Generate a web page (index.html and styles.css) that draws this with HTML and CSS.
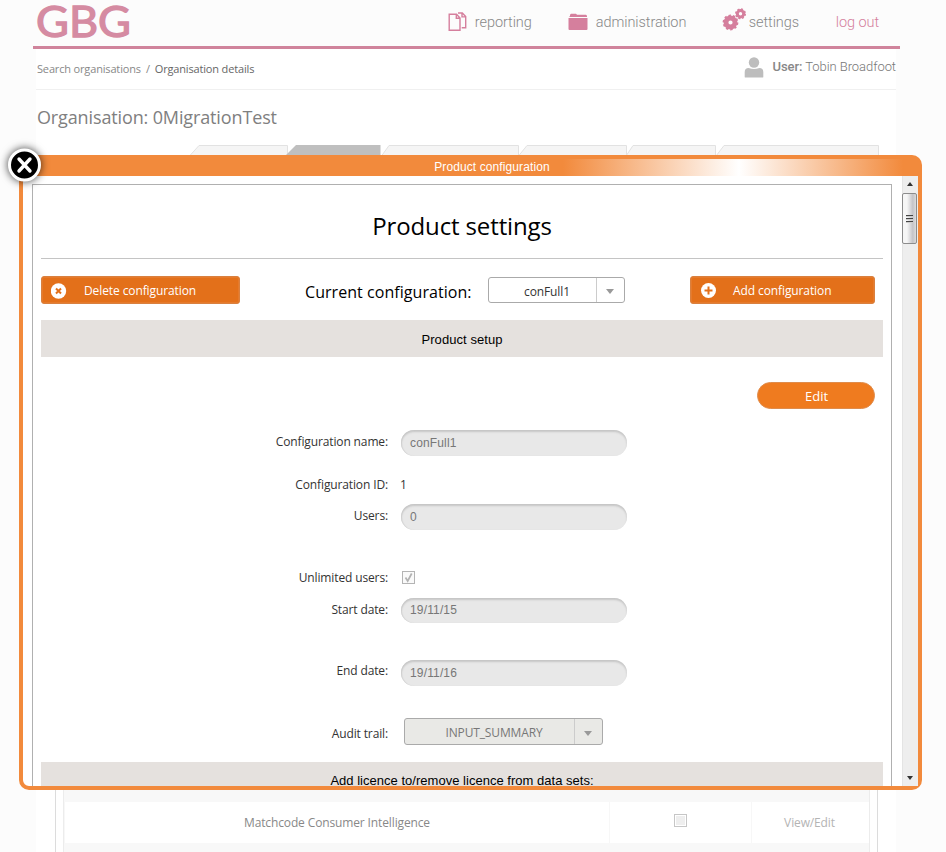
FILE: index.html
```
<!DOCTYPE html>
<html lang="en">
<head>
    <meta charset="UTF-8">
    <meta name="viewport" content="width=device-width, initial-scale=1.0">
    <title>Organisation details</title>
    <link rel="stylesheet" href="styles.css">
</head>
<body>
    <header class="header">
        <svg class="logo" width="110" height="46" viewBox="0 0 110 46">
            <text x="3" y="37.3" textLength="95" lengthAdjust="spacingAndGlyphs">GBG</text>
        </svg>
        <nav class="nav">
            <a class="nav-item reporting">
                <svg width="20" height="20" viewBox="0 0 20 20" fill="none" stroke="#d57f9d" stroke-width="1.4">
                    <path d="M1.2 2.2h7.3l3.5 3.8v12.3H1.2z M8.3 2.4v3.9h3.5"/>
                    <path d="M10 1h4.3l3.4 3.6v11.2h-4 M14 1.2v3.7h3.5"/>
                </svg>
                <span>reporting</span>
            </a>
            <a class="nav-item administration">
                <svg width="20" height="18" viewBox="0 0 20 18">
                    <path d="M2 3V1.8L3 .8h5l1 1h9l1 1V4H1z" fill="#d57f9d"/>
                    <path d="M.5 5h19v11a1 1 0 0 1-1 1h-17a1 1 0 0 1-1-1z" fill="#d57f9d"/>
                </svg>
                <span>administration</span>
            </a>
            <a class="nav-item settings">
                <svg width="24" height="24" viewBox="0 0 24 24" fill="none" stroke="#d57f9d">
                    <circle cx="8.5" cy="14.5" r="4.5" stroke-width="4.8"/>
                    <circle cx="8.5" cy="14.5" r="7" stroke-width="1.8" stroke-dasharray="2.4 1.998"/>
                    <circle cx="18.5" cy="5.8" r="3.2" stroke-width="3"/>
                    <circle cx="18.5" cy="5.8" r="4.8" stroke-width="1.4" stroke-dasharray="2 1.77"/>
                </svg>
                <span>settings</span>
            </a>
            <a class="nav-item logout"><span>log out</span></a>
        </nav>
    </header>

    <main class="page">
        <div class="topbar">
            <div class="breadcrumb"><a>Search organisations</a><i>/</i><b>Organisation details</b></div>
            <div class="user">
                <svg width="20" height="21" viewBox="0 0 20 21" fill="#bdbdbd">
                    <circle cx="10" cy="5.5" r="5.2"/>
                    <path d="M.7 20V15q0-4 4-4 5.3 2.2 10.6 0 4 0 4 4v5q0 .5-1 .5H1.7q-1 0-1-.5z"/>
                </svg>
                <span class="user-name"><strong>User:</strong> Tobin Broadfoot</span>
            </div>
        </div>
        <h2 class="org-title">Organisation: 0MigrationTest</h2>
        <svg class="tabs" width="700" height="12" viewBox="0 0 700 12" fill="#f5f5f5" stroke="#e2e2e2">
            <path d="M1.5 11L11 .5h88.5V12"/>
            <path d="M193.5 11L201 .5h129.5V12"/>
            <path d="M330.5 11L339 .5h99.5V12"/>
            <path d="M438 11L445 .5h82.5V12"/>
            <path d="M528 11L536 .5h154.500V12"/>
            <path d="M97 11L108 0h84.500v12H97z" fill="#bfbfbf" stroke="none"/>
        </svg>
        <div class="tab-panel">
            <div class="table">
                <div class="row alt hidden-row"></div>
                <div class="row">
                    <div class="cell cell-name">Matchcode Consumer Intelligence</div>
                    <div class="cell cell-check"><span class="check"></span></div>
                    <div class="cell cell-action">View/Edit</div>
                </div>
                <div class="row alt"></div>
            </div>
        </div>
    </main>

    <div class="modal">
        <div class="modal-title"><span>Product configuration</span></div>
        <div class="modal-body">
            <div class="panel">
                <h1>Product settings</h1>
                <div class="toolbar">
                    <button class="btn btn-delete">
                        <svg width="16" height="16" viewBox="0 0 16 16">
                            <circle cx="7.5" cy="8" r="7.7" fill="#fff"/>
                            <path d="M5 5.500l5 5M10 5.500l-5 5" stroke="#e3701a" stroke-width="2"/>
                        </svg>
                        <span>Delete configuration</span>
                    </button>
                    <span class="current-label">Current configuration:</span>
                    <div class="select select-config"><span>conFull1</span><i></i></div>
                    <button class="btn btn-add">
                        <svg width="16" height="16" viewBox="0 0 16 16">
                            <circle cx="7.5" cy="7.500" r="7.500" fill="#fff"/>
                            <path d="M7.500 3.500v8M3.500 7.500h8" stroke="#e3701a" stroke-width="2"/>
                        </svg>
                        <span>Add configuration</span>
                    </button>
                </div>
                <div class="section">Product setup</div>
                <div class="edit-row"><button class="btn-edit">Edit</button></div>
                <div class="field f-name"><label>Configuration name:</label><div class="input">conFull1</div></div>
                <div class="field f-id"><label>Configuration ID:</label><span class="value">1</span></div>
                <div class="field f-users"><label>Users:</label><div class="input">0</div></div>
                <div class="field f-unlimited">
                    <label>Unlimited users:</label>
                    <svg class="ticked" width="13" height="13" viewBox="0 0 13 13" fill="none">
                        <rect x=".5" y=".5" width="12" height="12" fill="#fafafa" stroke="#b4b4b4"/>
                        <path d="M3.500 6.500l2.200 3.500 4-7.500" stroke="#b2b2b2" stroke-width="1.700"/>
                    </svg>
                </div>
                <div class="field f-start"><label>Start date:</label><div class="input">19/11/15</div></div>
                <div class="field f-end"><label>End date:</label><div class="input">19/11/16</div></div>
                <div class="field f-audit"><label>Audit trail:</label><div class="select select-audit"><span>INPUT_SUMMARY</span><i></i></div></div>
                <div class="section section-licence">Add licence to/remove licence from data sets:</div>
            </div>
            <div class="scrollbar">
                <span class="arrow arrow-up"></span>
                <div class="thumb"><i></i><i></i><i></i></div>
                <span class="arrow arrow-down"></span>
            </div>
        </div>
        <svg class="close" width="46" height="46" viewBox="0 0 46 46">
            <circle cx="22.500" cy="23" r="15" fill="#000" stroke="#fff" stroke-width="3"/>
            <path d="M17 17l11 12M28 17l-11 12" stroke="#fff" stroke-width="3.400" stroke-linecap="round"/>
        </svg>
    </div>
</body>
</html>
```

FILE: styles.css
```
* {
    margin: 0;
    padding: 0;
    box-sizing: border-box;
}

body {
    width: 946px;
    height: 852px;
    overflow: hidden;
    background: #fcfcfc;
    font-family: 'Open Sans', 'Noto Sans', sans-serif;
    font-size: 12px;
    letter-spacing: -0.13px;
    color: #333;
}

/* header */
.header {
    display: flex;
    justify-content: space-between;
    height: 49px;
    margin: 0 46px 0 33px;
    border-bottom: 3px solid #d0849c;
}

.logo {
    overflow: visible;
}

.logo text {
    font-family: 'Lato', sans-serif;
    font-weight: 400;
    font-size: 43px;
    letter-spacing: 0;
    fill: #d58ba2;
    stroke: #d58ba2;
    stroke-width: 1.3px;
}

.nav {
    display: flex;
    align-items: center;
    height: 43px;
    padding-right: 21px;
    font-family: 'Roboto', sans-serif;
    font-weight: 300;
    font-size: 14.5px;
    letter-spacing: -0.08px;
    color: #888;
}

.nav-item {
    display: flex;
    align-items: center;
    white-space: nowrap;
}

.nav-item span {
    padding-top: 1px;
}

.reporting { width: 120px; gap: 7px; }
.administration { width: 154px; gap: 8px; }
.settings { width: 114px; gap: 3px; }
.settings svg { margin-top: -3px; }
.logout { color: #d57f9d; }

/* page behind the dialog */
.page {
    display: flex;
    flex-direction: column;
    width: 860px;
    height: 803px;
    margin-left: 36px;
    background: #fff;
}

.topbar {
    display: flex;
    flex: none;
    justify-content: space-between;
    height: 41px;
    border-bottom: 1px solid #f0f0f0;
}

.breadcrumb {
    padding: 12px 0 0 1px;
    font-size: 11px;
    letter-spacing: -0.16px;
    line-height: 16px;
    color: #888;
}

.breadcrumb i {
    margin: 0 5px;
    font-style: normal;
}

.breadcrumb b {
    font-weight: 400;
    color: #666;
}

.user {
    display: flex;
    gap: 9px;
    padding-top: 8px;
    font-family: 'Roboto', sans-serif;
    font-weight: 300;
    font-size: 13px;
    letter-spacing: -0.06px;
    line-height: 19px;
    color: #777;
}

.user strong {
    font-weight: 500;
    color: #888;
}

.org-title {
    flex: none;
    height: 55px;
    padding: 14px 0 0 1px;
    font-size: 18px;
    font-weight: 400;
    line-height: 26px;
    color: #808080;
}

.tabs {
    flex: none;
    margin-left: 152px;
}

.tab-panel {
    flex: 1;
    min-height: 0;
    margin: 0 18px 0 19px;
    padding: 0 7px;
    border: 1px solid #dcdcdc;
    border-top: none;
    border-bottom: none;
    overflow: hidden;
}

.table {
    border: 1px solid #ececec;
    border-top: none;
}

.row {
    display: flex;
    height: 41px;
    background: #fff;
}

.row.alt {
    background: #f8f8f8;
}

.row.hidden-row {
    height: 645px;
}

.cell {
    display: flex;
    align-items: center;
    justify-content: center;
    color: #888;
    border-left: 1px solid #f7f7f7;
}

.cell-name { width: 545px; }
.cell-check { width: 142px; padding-bottom: 4px; }
.cell-action { flex: 1; padding-right: 2px; color: #b4b4b4; }

.check {
    width: 13px;
    height: 13px;
    border: 1px solid #c6c6c6;
    background: #eee;
    box-shadow: inset 0 0 0 1px #fff;
}

/* dialog */
.modal {
    position: absolute;
    left: 19px;
    top: 155px;
    width: 903px;
    height: 635px;
    border: 4px solid #f28a3c;
    border-radius: 10px;
    background: #fff;
}

.modal-title {
    display: flex;
    justify-content: center;
    height: 17px;
    padding: 0 24px 0 67px;
    background: linear-gradient(90deg, #f28a3c 540px, #fff 716px, #f28a3c 880px);
    font-family: 'Liberation Sans', sans-serif;
    font-size: 12px;
    letter-spacing: 0.1px;
    line-height: 16px;
    color: #fff;
}

.modal-body {
    display: flex;
    justify-content: space-between;
    height: 610px;
    overflow: hidden;
    padding-left: 9px;
}

.panel {
    width: 860px;
    height: 700px;
    margin-top: 8px;
    padding: 0 8px;
    border: 1px solid #b0b0b0;
    overflow: hidden;
}

.panel h1 {
    height: 74px;
    padding-top: 24px;
    border-bottom: 1px solid #c4c4c4;
    font-size: 24px;
    font-weight: 400;
    line-height: 34px;
    text-align: center;
    color: #000;
}

.toolbar {
    display: flex;
    align-items: center;
    height: 61px;
    padding: 1px 8px 0 0;
}

.btn {
    display: flex;
    align-items: center;
    height: 28px;
    padding-top: 1px;
    border: 1px solid #d9803f;
    border-radius: 3px;
    background: #e3701a;
    box-shadow: inset 0 0 0 1px #e67a2b;
    font-family: inherit;
    font-size: 12px;
    letter-spacing: -0.1px;
    color: #fff;
}

.btn-delete {
    width: 199px;
    padding-left: 9px;
    gap: 17px;
}

.btn-add {
    width: 185px;
    margin-left: auto;
    padding-left: 10px;
    gap: 16px;
}

.current-label {
    width: 183px;
    margin-left: 65px;
    padding-top: 3px;
    font-size: 16px;
    letter-spacing: 0.05px;
    color: #000;
}

.select {
    display: flex;
    border: 1px solid #aaa;
    border-radius: 3px;
    font-size: 12px;
}

.select span {
    flex: 1;
    text-align: center;
}

.select i {
    display: flex;
    align-items: center;
    justify-content: center;
    width: 28px;
    border-left: 1px solid #ccc;
}

.select i::before {
    content: '';
    margin: 3px 1px 0 0;
    border: 4px solid transparent;
    border-top: 5px solid #999;
    border-bottom: none;
}

.select-config {
    width: 137px;
    height: 26px;
    padding-left: 9px;
    line-height: 27px;
}

.section {
    height: 37px;
    background: #e5e1de;
    font-family: 'Liberation Sans', sans-serif;
    font-size: 13px;
    letter-spacing: 0.06px;
    line-height: 39px;
    text-align: center;
    color: #000;
}

.section-licence {
    letter-spacing: 0.02px;
    line-height: 37px;
}

.edit-row {
    display: flex;
    justify-content: flex-end;
    height: 73px;
    padding: 25px 8px 0 0;
}

.btn-edit {
    width: 118px;
    height: 27px;
    padding-left: 1px;
    border: 1px solid #df8c4c;
    border-radius: 14px;
    background: #ef7b1f;
    font-family: inherit;
    font-size: 13px;
    color: #fff;
}

.field {
    display: flex;
    align-items: center;
    height: 26px;
}

.field label {
    width: 347px;
    margin-right: 13px;
    padding-bottom: 3px;
    text-align: right;
}

.f-id { margin-top: 16px; }
.f-id label { padding-bottom: 2px; }
.f-users { margin-top: 6px; }
.f-unlimited { margin-top: 34px; }
.f-unlimited label { padding-bottom: 0; }
.f-start { height: 25px; margin-top: 8px; }
.f-end { margin-top: 37px; }
.f-end label { padding-bottom: 5px; }

.f-audit {
    height: 27px;
    margin: 32px 0 17px;
}

.f-audit label {
    padding: 4px 0 0;
}

.value {
    margin-left: -1px;
    padding-bottom: 2px;
}

.ticked {
    margin-left: 1px;
}

.input {
    width: 226px;
    height: 100%;
    padding-left: 9px;
    border-radius: 13px;
    background: #e8e8e8;
    box-shadow: inset 0 2px 2px #c6c6c6, inset 1px 0 1px #d4d4d4;
    font-family: 'Liberation Sans', sans-serif;
    font-size: 12px;
    letter-spacing: 0.15px;
    line-height: 26px;
    color: #777;
}

.f-start .input {
    line-height: 24px;
}

.select-audit {
    width: 199px;
    height: 27px;
    margin-left: 3px;
    padding-left: 9px;
    background: #e9e9e6;
    line-height: 28px;
    color: #777;
}

/* scrollbar */
.scrollbar {
    display: flex;
    flex-direction: column;
    align-items: center;
    width: 16px;
    height: 610px;
    padding-right: 1px;
    border-left: 1px solid #e4e4e4;
    background: #eee;
}

.arrow {
    border: 3px solid transparent;
}

.arrow-up {
    margin: 6px 0 7px;
    border-top: none;
    border-bottom: 4px solid #333;
}

.arrow-down {
    margin: auto 0 6px;
    border-bottom: none;
    border-top: 4px solid #333;
}

.thumb {
    display: flex;
    flex-direction: column;
    align-items: center;
    justify-content: center;
    gap: 1px;
    width: 15px;
    height: 51px;
    margin-left: -1px;
    border: 1px solid #8c8c8c;
    border-radius: 2px;
    background: linear-gradient(90deg, #f6f6f6 30%, #c4c4c8 75%, #dcdcdc);
}

.thumb i {
    width: 7px;
    height: 2px;
    border-top: 1px solid #444;
    border-bottom: 1px solid #ccc;
}

.close {
    position: absolute;
    left: -21px;
    top: -17px;
    filter: drop-shadow(0 0 4px rgba(0, 0, 0, 0.75));
}
```
